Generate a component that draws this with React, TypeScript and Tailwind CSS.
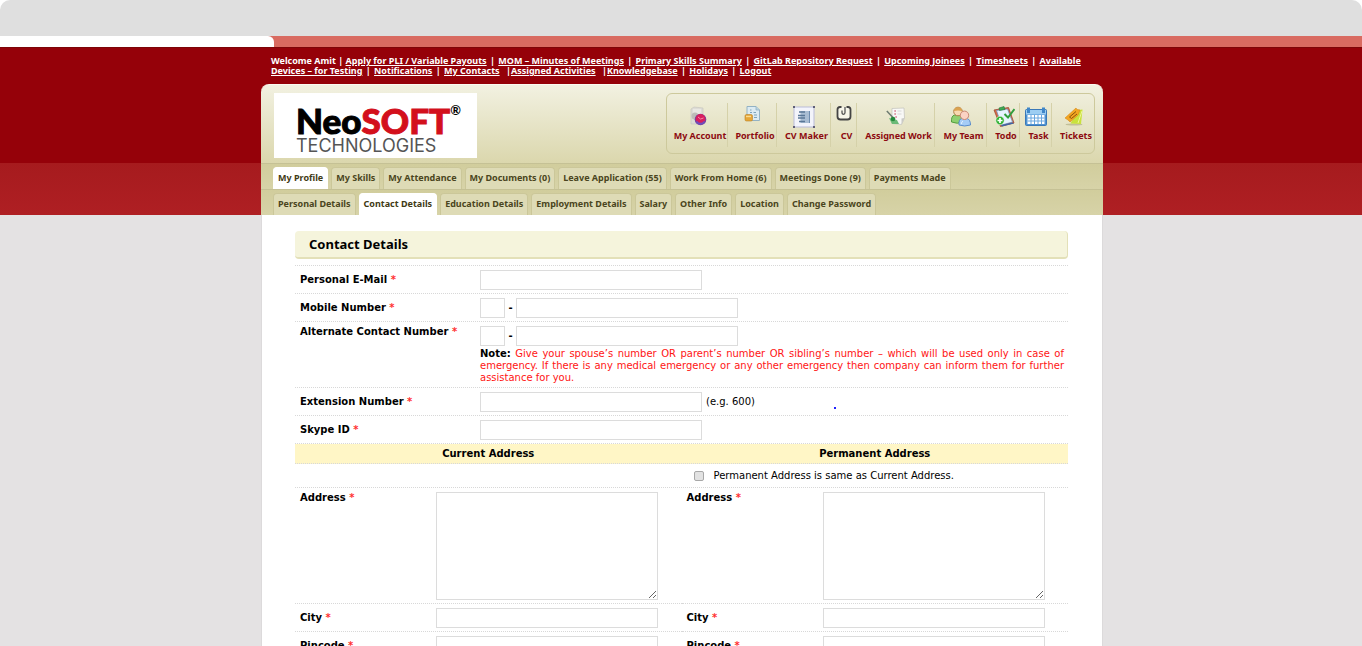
import { useId, type ReactNode } from "react";

const links: { text: string; tight?: boolean }[] = [
  { text: "Apply for PLI / Variable Payouts" },
  { text: "MOM – Minutes of Meetings" },
  { text: "Primary Skills Summary" },
  { text: "GitLab Repository Request" },
  { text: "Upcoming Joinees" },
  { text: "Timesheets" },
  { text: "Available Devices – for Testing" },
  { text: "Notifications" },
  { text: "My Contacts", tight: true },
  { text: "Assigned Activities", tight: true },
  { text: "Knowledgebase" },
  { text: "Holidays" },
  { text: "Logout" },
];

function AccountIcon() {
  return (
    <svg viewBox="0 0 20 22" className="h-[22px] w-5" aria-hidden="true">
      <path d="M3 3l3-2 9 1v14l-4 2H3z" fill="#dddcd6" stroke="#c4c3bc" strokeWidth=".6" />
      <path d="M5 4h8M5 6h8M5 8h8" stroke="#f4f4f0" strokeWidth="1" />
      <circle cx="7" cy="10" r="3.5" fill="#bdbcb8" />
      <circle cx="12.500" cy="13.500" r="5.800" fill="#7a3f9c" />
      <circle cx="12.500" cy="12.800" r="4.800" fill="#d81f5e" />
      <path d="M8.500 15.500c2 3 6 3 8 0" stroke="#6b4fc0" strokeWidth="1.800" fill="none" />
      <path d="M10 11l2.500 2 3-1" stroke="#f58aa8" strokeWidth="1" fill="none" />
    </svg>
  );
}

function PortfolioIcon() {
  return (
    <svg viewBox="0 0 20 22" className="h-[22px] w-5" aria-hidden="true">
      <path d="M4 .5h9L16.500 4v10.500H4z" fill="#dcebf2" stroke="#93b2c4" />
      <path d="M13 .5V4h3.500" fill="#b9d3e0" stroke="#93b2c4" strokeWidth=".8" />
      <path d="M7 4h1.500M7 6.500h2m1.500 0H13M11 9h3m-3 2.500h3" stroke="#7ea3b8" strokeWidth="1.200" />
      <rect x="2" y="8.500" width="7.500" height="6.500" rx="1.500" fill="#e6a637" stroke="#b98025" strokeWidth=".6" />
      <path d="M3 10.500h5" stroke="#f9dc91" strokeWidth="1.400" />
    </svg>
  );
}

function CvMakerIcon() {
  return (
    <svg viewBox="0 0 22 22" className="size-[22px]" aria-hidden="true">
      <rect x="1" y="1" width="20" height="20" fill="#f3f4fb" stroke="#b9bbd9" />
      <path d="M0 0h2v2H0zM20 0h2v2h-2zM0 20h2v2H0zM20 20h2v2h-2z" fill="#5f5f78" />
      <rect x="7.500" y="5" width="9.500" height="12" fill="#a9bdd3" />
      <path d="M6 6h6M5 9.500h7M5 12h7M6 15.500h6" stroke="#5a7797" strokeWidth="1.300" />
      <path d="M16.500 5v12" stroke="#6f8db0" />
    </svg>
  );
}

function CvIcon() {
  return (
    <svg viewBox="0 0 16 22" className="h-[22px] w-4" aria-hidden="true">
      <path d="M5.500 1H4Q1.500 1 1.500 3.500v7q0 3 3 3h7q3 0 3-3v-7Q14.500 1 12 1H10.500" fill="#f7f6ea" stroke="#444" strokeWidth="1.800" />
      <path d="M9 1v5.500q0 1.800-1.500 1.800T6 6.500V4.500" fill="none" stroke="#555" strokeWidth="1.300" />
    </svg>
  );
}

function WorkIcon() {
  return (
    <svg viewBox="0 0 20 22" className="h-[22px] w-5" aria-hidden="true">
      <path d="M6 2.500l12-.5.500 10-3 6.500-9.500-1z" fill="#f8f8f6" stroke="#c2c1bc" strokeWidth=".7" />
      <path d="M18.500 12l-3 .5v6z" fill="#c9c9c5" />
      <path d="M8.500 5h1.200M8.500 8h1.200M9.500 11h1.200" stroke="#c9506a" strokeWidth="1.300" />
      <path d="M11.500 5h4M11.500 8h4" stroke="#d8d8d8" />
      <path d="M3 12l8 2 2 4-7 0z" fill="#6cba78" />
      <path d="M.8 5l8 8.500" stroke="#6d7a70" strokeWidth="1.500" />
      <circle cx="7" cy="13" r="2.300" fill="#268a3c" />
    </svg>
  );
}

function TeamIcon() {
  return (
    <svg viewBox="0 0 22 22" className="size-[22px]" aria-hidden="true">
      <path d="M1.500 16q-.5-6 3-7h5q3 1.500 3 7-5 2.500-11 0z" fill="#8fd070" stroke="#4b9838" strokeWidth=".9" />
      <circle cx="8" cy="5.500" r="4.300" fill="#f8d9b0" stroke="#b08048" />
      <path d="M3.800 5Q4.500.8 8.500 1.200 11.800 1.500 12.200 5 8 4 3.800 5z" fill="#dba350" />
      <path d="M9 19q-.5-6 3-6.500h5q3.500 1 3.500 6.500-6 2-11.500 0z" fill="#a5ccf6" stroke="#4d82c8" strokeWidth=".9" />
      <circle cx="14.500" cy="9.300" r="4.200" fill="#fbd3c4" stroke="#c98872" />
      <path d="M11.500 18q0-2.500 1.500-3" stroke="#e4f1ff" fill="none" />
    </svg>
  );
}

function TodoIcon() {
  return (
    <svg viewBox="0 0 22 22" className="size-[22px]" aria-hidden="true">
      <path d="M1 4l14.500-2.500L21 17 7.500 20.500z" fill="#d86a42" stroke="#9d4a35" strokeWidth=".8" />
      <path d="M3.500 4.500l11-1.500 5 13-11 3z" fill="#e6f3ff" stroke="#6991c4" strokeWidth=".7" />
      <path d="M19.500 16.500l1.500 1-12 3-1-1.500z" fill="#3e66a8" />
      <path d="M6 2l5-1.500 1 3-5.500 1z" fill="#3eaa52" stroke="#24763a" strokeWidth=".6" />
      <path d="M11.500 8l3.500 3.500 6.500-8.500" fill="none" stroke="#2f9e3d" strokeWidth="2" />
      <circle cx="7" cy="14.500" r="4.200" fill="#35b336" stroke="#fff" strokeWidth=".5" />
      <path d="M7 12v5M4.500 14.500h5" stroke="#fff" strokeWidth="1.700" />
    </svg>
  );
}

function TaskIcon() {
  return (
    <svg viewBox="0 0 22 22" className="size-[22px]" aria-hidden="true">
      <rect x=".5" y="3.500" width="21" height="16" rx="1" fill="#4f93d2" stroke="#3a78b8" />
      <rect x="1" y="4" width="20" height="4.500" fill="#9ccdf2" />
      <path d="M2.500 9h17v9h-17z" fill="#fff" />
      <path d="M6 9v9M9.500 9v9M13 9v9M16.500 9v9M2.500 12h17M2.500 15h17" stroke="#68a6de" />
      <path d="M2 1.500h3v5.500H2zM17 1.500h3v5.500h-3z" fill="#3f86c8" />
    </svg>
  );
}

function TicketsIcon() {
  return (
    <svg viewBox="0 0 20 22" className="h-[22px] w-5" aria-hidden="true">
      <ellipse cx="10" cy="18.500" rx="8.500" ry="1" fill="#c2bf98" />
      <path d="M14 4l4.500-.5-1.500 14.500-10.500-.5z" fill="#c9e23c" />
      <path d="M18 5l-4 12" stroke="#f2f7a2" strokeWidth=".9" />
      <path d="M1 12L12 2l1 1.500 3 .5-2 5-8 7-2-2z" fill="#f3a621" stroke="#d88a18" strokeWidth=".6" />
      <path d="M5.500 11l6.500-5.500M7.500 12.500L13 8M5.500 11l2 1.500" stroke="#8a530c" strokeWidth="1" />
    </svg>
  );
}

const tools: { label: string; icon: ReactNode; width: string }[] = [
  { label: "My Account", icon: <AccountIcon />, width: "w-[61px]" },
  { label: "Portfolio", icon: <PortfolioIcon />, width: "w-[49px]" },
  { label: "CV Maker", icon: <CvMakerIcon />, width: "w-[54px]" },
  { label: "CV", icon: <CvIcon />, width: "w-[26px]" },
  { label: "Assigned Work", icon: <WorkIcon />, width: "w-[78px]" },
  { label: "My Team", icon: <TeamIcon />, width: "w-[52px]" },
  { label: "Todo", icon: <TodoIcon />, width: "w-[33px]" },
  { label: "Task", icon: <TaskIcon />, width: "w-8" },
  { label: "Tickets", icon: <TicketsIcon />, width: "w-[42px]" },
];

const mainTabs = [
  "My Profile",
  "My Skills",
  "My Attendance",
  "My Documents (0)",
  "Leave Application (55)",
  "Work From Home (6)",
  "Meetings Done (9)",
  "Payments Made",
];

const subTabs = [
  "Personal Details",
  "Contact Details",
  "Education Details",
  "Employment Details",
  "Salary",
  "Other Info",
  "Location",
  "Change Password",
];

function Tabs({ items, active, label }: { items: string[]; active: string; label: string }) {
  return (
    <nav
      aria-label={label}
      className="flex h-[26px] items-end gap-[3px] border-t border-[#c5c195] bg-linear-to-b from-[#d1cd9c] to-[#d7d3a8] pl-3"
    >
      {items.map((item) => (
        <a
          key={item}
          href="#"
          aria-current={item === active ? "page" : undefined}
          className={
            item === active
              ? "flex h-[22px] items-center rounded-t-[4px] border border-b-0 border-white bg-white px-1 pb-0.5 text-[#3f3a14]"
              : "flex h-[22px] items-center rounded-t-[4px] border border-b-0 border-[#cbc799] bg-[#dedbb6] px-1 pb-0.5 text-[#4a4520]"
          }
        >
          {item}
        </a>
      ))}
    </nav>
  );
}

const box = "border border-[#dcdcdc] bg-white";
const line = "border-b border-dotted border-[#d8d8d8]";

function Req() {
  return <span className="text-[#ff3030]"> *</span>;
}

function Row({ label, children, top = false }: { label: (id: string) => ReactNode; children: (id: string) => ReactNode; top?: boolean }) {
  const id = useId();
  return (
    <div className={`flex pt-1 pb-[3px] ${line} ${top ? "items-start" : "items-center"}`}>
      <div className="w-[185px] shrink-0 pl-[5px]">{label(id)}</div>
      <div className="min-w-0 flex-1 pr-1">{children(id)}</div>
    </div>
  );
}

function FieldLabel({ id, children }: { id: string; children: ReactNode }) {
  return (
    <label htmlFor={id} className="block font-bold">
      {children}
      <Req />
    </label>
  );
}

function PhoneInputs({ id, name }: { id: string; name: string }) {
  return (
    <div className="flex items-center">
      <input aria-label={`${name} country code`} className={`h-5 w-[25px] ${box}`} />
      <span className="w-[11px] text-center font-bold">-</span>
      <input id={id} type="tel" className={`h-5 w-[222px] ${box}`} />
    </div>
  );
}

function AddressField({ name, multiline = false }: { name: string; multiline?: boolean }) {
  const id = useId();
  return (
    <div className={`flex pt-1 pb-[3px] ${line} ${multiline ? "items-start" : "items-center"}`}>
      <div className="w-[141px] shrink-0 pl-[5px]">
        <FieldLabel id={id}>{name}</FieldLabel>
      </div>
      {multiline ? (
        <textarea id={id} className={`block h-[108px] w-[222px] ${box}`} />
      ) : (
        <input id={id} className={`h-5 w-[222px] ${box}`} />
      )}
    </div>
  );
}

export default function App() {
  return (
    <div className="min-h-screen bg-[#e4e2e3] font-['DejaVu_Sans','Liberation_Sans',sans-serif] text-[10px] leading-3 text-black">
      <div className="bg-white">
        <div className="h-9 rounded-t-[10px] bg-[#dfdfdf]" />
        <div className="flex h-[11px] bg-[#d96b61]">
          <div className="h-[11px] w-[274px] rounded-tr-[6px] bg-white" />
        </div>
      </div>

      <header className="border-t border-[#7d0508] bg-[#950109] pl-0.5 font-['Noto_Sans','Open_Sans',sans-serif] text-[9px] font-bold">
        <div className="mx-auto w-[842px]">
          <p className="h-9 pt-2 pr-2 pl-[10px] leading-[10px] text-white">
            Welcome Amit |{" "}
            {links.map((l, i) => (
              <span key={l.text}>
                <a href="#" className="underline">
                  {l.text}
                </a>
                {i < links.length - 1 && (l.tight ? <span className="pl-1"> |</span> : <span className="px-px"> | </span>)}
              </span>
            ))}
          </p>
          <div className="flex h-[79px] items-start justify-between rounded-t-[8px] border-t border-[#fbfaf0] bg-linear-to-b from-[#f2f1e1] to-[#dbd7ad] pt-2 pr-2 pl-[13px]">
            <div className="h-[65px] w-[203px] bg-white pt-[7px] pl-[22px] font-['Lato',sans-serif]">
              <div className="flex items-start text-[35px] leading-10 font-black">
                <span className="text-black [-webkit-text-stroke:1px_#000]">Neo</span>
                <span className="text-[#d3101c] [-webkit-text-stroke:1px_#d3101c]">SOFT</span>
                <span className="text-[13px] leading-5 font-bold text-black">®</span>
              </div>
              <div className="font-['Inter',sans-serif] text-[18px] leading-3 font-normal text-[#555]">TECHNOLOGIES</div>
            </div>
            <nav aria-label="Tools" className="flex h-[61px] items-start rounded-[6px] border border-[#cdc99c] pt-[9px]">
              {tools.map((t) => (
                <a
                  key={t.label}
                  href="#"
                  className={`flex h-[44px] flex-col items-center gap-0.5 border-r border-[#d5d1a9] pt-[3px] pl-1.5 whitespace-nowrap text-[#8d0a10] last:border-r-0 ${t.width}`}
                >
                  <span className="pr-[5px]">{t.icon}</span>
                  <span className="leading-3">{t.label}</span>
                </a>
              ))}
            </nav>
          </div>
        </div>
      </header>

      <div className="bg-linear-to-b from-[#a61b1e] to-[#af1f23] pl-0.5 font-['Noto_Sans','Open_Sans',sans-serif] text-[9px] font-bold">
        <div className="mx-auto w-[842px]">
          <Tabs items={mainTabs} active="My Profile" label="Main" />
          <Tabs items={subTabs} active="Contact Details" label="Profile" />
        </div>
      </div>

      <div className="pl-0.5">
        <main className="mx-auto w-[842px] border-x border-[#dcdadb] bg-white pt-4 pr-[34px] pl-[33px]">
          <h1 className="rounded-[4px] border-r border-b-2 border-[#e3e0b8] bg-[#f5f4dc] py-[5px] pl-[14px] font-['Noto_Sans',sans-serif] text-[13px] leading-4 font-bold">
            Contact Details
          </h1>
          <form className="pt-1.5">
            <div className={line} />
            <Row label={(id) => <FieldLabel id={id}>Personal E-Mail</FieldLabel>}>
              {(id) => <input id={id} type="email" className={`block h-5 w-[222px] ${box}`} />}
            </Row>
            <Row label={(id) => <FieldLabel id={id}>Mobile Number</FieldLabel>}>{(id) => <PhoneInputs id={id} name="Mobile" />}</Row>
            <Row top label={(id) => <FieldLabel id={id}>Alternate Contact Number</FieldLabel>}>
              {(id) => (
                <>
                  <PhoneInputs id={id} name="Alternate" />
                  <p className="pt-0.5 text-justify text-[#ff1414]">
                    <b className="text-black">Note:</b> Give your spouse’s number OR parent’s number OR sibling’s number – which will be used only in case
                    of emergency. If there is any medical emergency or any other emergency then company can inform them for further assistance for you.
                  </p>
                </>
              )}
            </Row>
            <Row label={(id) => <FieldLabel id={id}>Extension Number</FieldLabel>}>
              {(id) => (
                <div className="flex items-center">
                  <input id={id} className={`h-5 w-[222px] ${box}`} />
                  <span className="w-[132px] pl-1">(e.g. 600)</span>
                  <span className="mt-[11px] size-0.5 bg-[#2020ff]" />
                </div>
              )}
            </Row>
            <Row label={(id) => <FieldLabel id={id}>Skype ID</FieldLabel>}>
              {(id) => <input id={id} className={`block h-5 w-[222px] ${box}`} />}
            </Row>
            <div className={`grid grid-cols-2 bg-[#fff6c6] pt-1 pb-[3px] text-center font-bold ${line}`}>
              <h2>Current Address</h2>
              <h2>Permanent Address</h2>
            </div>
            <div className={`grid h-6 grid-cols-2 ${line}`}>
              <label className="col-start-2 flex items-center pl-3">
                <input
                  type="checkbox"
                  className="mr-[10px] size-[10px] appearance-none rounded-[2px] border border-[#a8a8a8] bg-[#e2e2e2] checked:bg-[#666]"
                />
                Permanent Address is same as Current Address.
              </label>
            </div>
            <div className="grid grid-cols-2">
              <AddressField name="Address" multiline />
              <AddressField name="Address" multiline />
              <AddressField name="City" />
              <AddressField name="City" />
              <AddressField name="Pincode" />
              <AddressField name="Pincode" />
            </div>
          </form>
        </main>
      </div>
    </div>
  );
}
